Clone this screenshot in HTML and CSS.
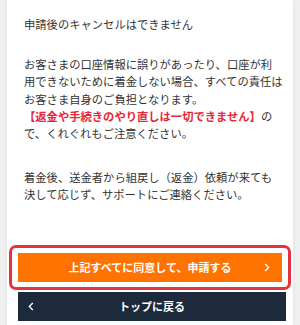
FILE: index.html
```html
<!DOCTYPE html>
<html lang="ja">
<head>
    <meta charset="UTF-8">
    <meta name="viewport" content="width=device-width, initial-scale=1.0">
    <title>申請の確認</title>
    <link rel="stylesheet" href="styles.css">
</head>
<body>
<div class="card">
    <p class="lead">申請後のキャンセルはできません</p>

    <p class="note">
        お客さまの口座情報に誤りがあったり、口座が利用できないために着金しない場合、すべての責任はお客さま自身のご負担となります。<br><span class="warn">【返金や手続きのやり直しは一切できません】</span>ので、くれぐれもご注意ください。
    </p>

    <p class="note">
        着金後、送金者から組戻し（返金）依頼が来ても決して応じず、サポートにご連絡ください。
    </p>

    <div class="agree-wrap">
        <button class="btn btn-orange">
            <span class="btn-label">上記すべてに同意して、申請する</span>
            <svg class="chev chev-right" width="6" height="9" viewBox="0 0 6 9"><path d="M1.2 1 L4.6 4.5 L1.2 8" fill="none" stroke="#fff" stroke-width="1.4"/></svg>
        </button>
    </div>

    <button class="btn btn-navy">
        <svg class="chev chev-left" width="6" height="9" viewBox="0 0 6 9"><path d="M4.8 1 L1.4 4.5 L4.8 8" fill="none" stroke="#fff" stroke-width="1.4"/></svg>
        <span class="btn-label">トップに戻る</span>
    </button>
</div>
</body>
</html>
```

FILE: styles.css
```css
body {
    margin: 0;
    padding: 0 7px;
    background-color: #efefef;
    font-family: "Noto Sans CJK JP", "Noto Sans", sans-serif;
    color: #333;
}

.card {
    background-color: #fff;
    padding: 16px 10px 5px 17px;
    box-shadow: 0 0 3px rgba(0, 0, 0, 0.08);
}

.lead, .note {
    margin: 0;
    font-size: 11.3px;
    line-height: 17.2px;
    line-break: anywhere;
}

.lead {
    margin-bottom: 23px;
}

.note {
    margin-bottom: 27px;
}

.warn {
    color: #e5283a;
    font-weight: bold;
}

.agree-wrap {
    margin: 41px -8px 0 -15px;
    padding: 5px 6px;
    border: 3px solid #e2343f;
    border-radius: 7px;
}

.btn {
    position: relative;
    display: flex;
    align-items: center;
    justify-content: center;
    width: 100%;
    height: 29px;
    padding: 0;
    border: none;
    border-radius: 0;
    font-family: inherit;
    font-size: 11px;
    font-weight: bold;
    color: #fff;
    cursor: pointer;
}

.btn-orange {
    background-color: #ff7300;
}

.btn-navy {
    width: calc(100% + 9px);
    margin: 2px 0 0 -6px;
    background-color: #1d2a3c;
}

.chev {
    position: absolute;
    top: 10px;
}

.chev-right {
    right: 12px;
}

.chev-left {
    left: 10px;
}
```
